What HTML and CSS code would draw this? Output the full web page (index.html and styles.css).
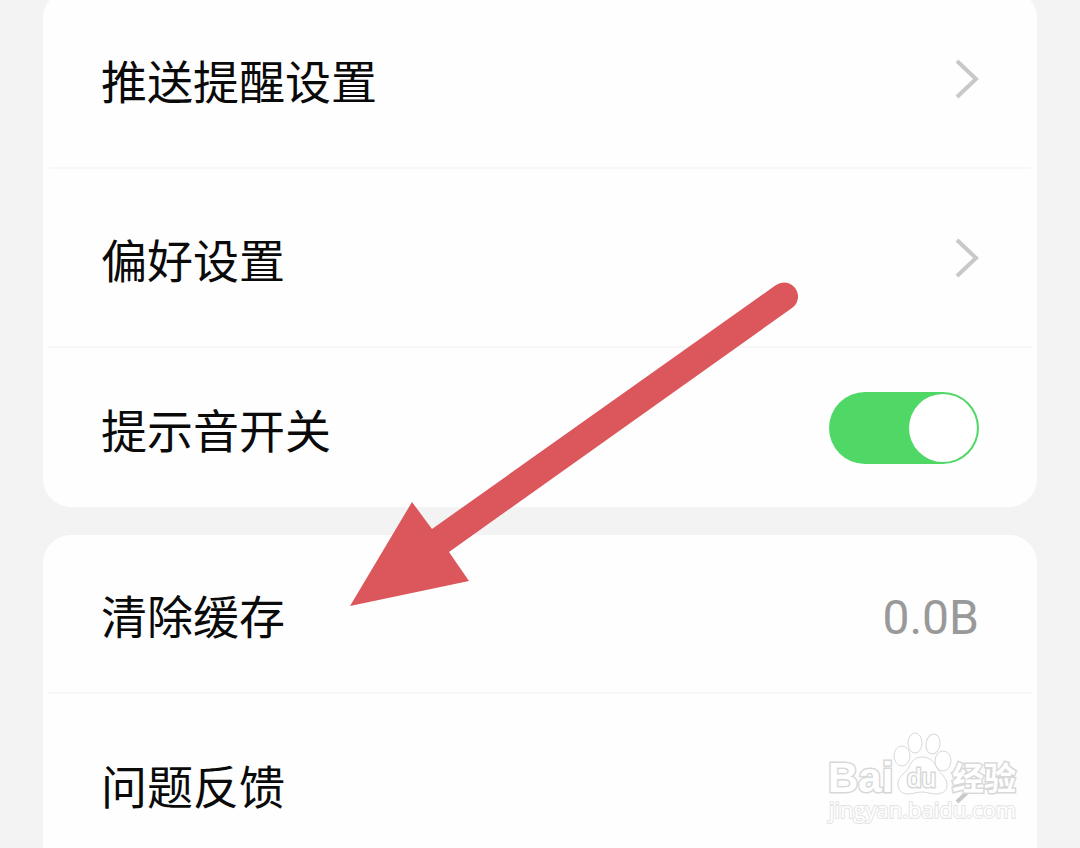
FILE: index.html
```html
<!DOCTYPE html>
<html lang="zh-CN">
<head>
  <meta charset="UTF-8">
  <meta name="viewport" content="width=device-width, initial-scale=1.0">
  <title>设置</title>
  <link rel="stylesheet" href="styles.css">
</head>
<body>
  <main class="settings">
    <section class="card">
      <a class="row" href="#push">
        <span class="label">推送提醒设置</span>
        <svg class="chevron" viewBox="0 0 24 40" aria-hidden="true"><path d="M2 2 L21 20 L2 38"/></svg>
      </a>
      <a class="row" href="#preference">
        <span class="label">偏好设置</span>
        <svg class="chevron" viewBox="0 0 24 40" aria-hidden="true"><path d="M2 2 L21 20 L2 38"/></svg>
      </a>
      <div class="row row-short">
        <label class="label" for="sound">提示音开关</label>
        <input class="switch" type="checkbox" id="sound" checked>
      </div>
    </section>

    <section class="card">
      <button class="row row-short" type="button">
        <span class="label">清除缓存</span>
        <span class="value">0.0B</span>
      </button>
      <a class="row" href="#feedback">
        <span class="label">问题反馈</span>
        <svg class="chevron" viewBox="0 0 24 40" aria-hidden="true"><path d="M2 2 L21 20 L2 38"/></svg>
      </a>
    </section>

    <svg class="arrow" viewBox="0 0 448 324" aria-hidden="true">
      <path d="M0 324 L62 220 L82 247 L426 3 A14 14 0 0 1 442 26 L99 270 L119 299 Z"/>
    </svg>

    <svg class="watermark" viewBox="0 0 200 100">
      <g class="outline">
        <text class="brand" x="4" y="62">Bai</text>
        <ellipse cx="78" cy="26" rx="8" ry="10"/>
        <ellipse cx="91" cy="13" rx="7" ry="10"/>
        <ellipse cx="109" cy="14" rx="7" ry="10" transform="rotate(10 109 14)"/>
        <ellipse cx="119" cy="31" rx="8" ry="10"/>
        <path d="M98 27 C106 27 110 32 113 38 C116 44 123 47 123 55 C123 61 118 64 112 64 C107 64 103 62 98 62 C92 62 89 64 84 64 C78 64 74 60 74 54 C74 46 82 43 85 37 C88 31 91 27 98 27 Z"/>
        <text class="du" x="83" y="57">du</text>
        <text class="jingyan" x="128" y="60">经验</text>
      </g>
      <text class="site" x="5" y="88">jingyan.baidu.com</text>
    </svg>
  </main>
</body>
</html>
```
FILE: styles.css
```css
* {
  box-sizing: border-box;
}

html {
  scrollbar-width: none;
}

body {
  margin: 0;
  background-color: #f3f3f3;
  color: #0a0a0a;
  font-family: "Noto Sans CJK SC", sans-serif;
}

/* the list is scrolled a little past its top edge */
.settings {
  position: relative;
  display: flex;
  flex-direction: column;
  gap: 28px;
  margin-top: -10px;
  padding: 0 43px;
}

.card {
  background-color: #fefefe;
  border-radius: 28px;
  padding: 0 6px;
}

.row {
  display: flex;
  align-items: center;
  justify-content: space-between;
  width: 100%;
  min-height: 179px;
  padding: 0 52px;
  border: none;
  border-bottom: 2px solid #f7f7f7;
  background: none;
  color: inherit;
  font-family: inherit;
  font-size: 46px;
  line-height: 60px;
  text-align: left;
  text-decoration: none;
}

.row:last-child {
  border-bottom: none;
}

.row-short {
  min-height: 159px;
}

button.row {
  cursor: pointer;
}

.value {
  padding-top: 8px;
  color: #999;
  font-family: Roboto, sans-serif;
  font-size: 48px;
}

.chevron {
  width: 24px;
  height: 40px;
  fill: none;
  stroke: #c8c8c8;
  stroke-width: 4;
}

.switch {
  appearance: none;
  display: flex;
  width: 150px;
  height: 72px;
  margin: 0;
  padding: 2px;
  border-radius: 36px;
  background-color: #ccc;
  cursor: pointer;
}

.switch::before {
  content: "";
  width: 68px;
  height: 68px;
  border-radius: 50%;
  background-color: #fff;
}

.switch:checked {
  justify-content: flex-end;
  background-color: #4fd866;
}

.arrow {
  position: absolute;
  top: 292px;
  left: 350px;
  width: 448px;
  height: 324px;
  fill: #db575b;
  pointer-events: none;
}

.watermark {
  position: absolute;
  top: 740px;
  right: 56px;
  width: 200px;
  height: 100px;
  pointer-events: none;
}

.outline {
  fill: #fff;
  stroke: #d8d8d8;
  stroke-width: 1;
}

.outline text {
  paint-order: stroke;
  stroke-width: 3;
}

.brand {
  font: bold 42px "Liberation Sans", sans-serif;
}

.du {
  font: 26px "Liberation Sans", sans-serif;
}

.jingyan {
  font: bold 32px "Noto Sans CJK SC", sans-serif;
}

.site {
  fill: #fff;
  stroke: #e4e4e4;
  stroke-width: 2;
  paint-order: stroke;
  font: 22px "Open Sans", sans-serif;
}
```
